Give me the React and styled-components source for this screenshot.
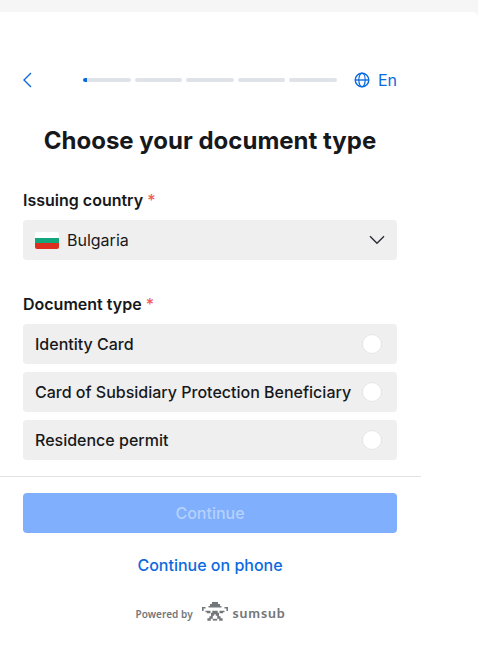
import React from "react";
import styled, { createGlobalStyle } from "styled-components";

const documents = [
  "Identity Card",
  "Card of Subsidiary Protection Beneficiary",
  "Residence permit",
];

function App() {
  return (
    <Page>
      <GlobalStyle />
      <Card>
        <Content>
          <Header>
            <BackButton aria-label="Back">
              <BackIcon />
            </BackButton>
            <Steps>
              <Step $progress={4} />
              <Step />
              <Step />
              <Step />
              <Step />
            </Steps>
            <Language>
              <GlobeIcon />
              En
            </Language>
          </Header>
          <Title>Choose your document type</Title>
          <Label>
            Issuing country <Required>*</Required>
          </Label>
          <CountrySelect>
            <Flag />
            <CountryName>Bulgaria</CountryName>
            <ChevronIcon />
          </CountrySelect>
          <Label>
            Document type <Required>*</Required>
          </Label>
          <Options>
            {documents.map((name) => (
              <Option key={name}>
                {name}
                <Radio />
              </Option>
            ))}
          </Options>
        </Content>
        <Footer>
          <ContinueButton disabled>Continue</ContinueButton>
          <PhoneLink>Continue on phone</PhoneLink>
          <Powered>
            <PoweredText>Powered by</PoweredText>
            <LogoIcon />
            <Brand>sumsub</Brand>
          </Powered>
        </Footer>
      </Card>
    </Page>
  );
}

const BackIcon = () => (
  <svg width="10" height="16" viewBox="0 0 10 16" fill="none">
    <path d="M8 1L1 8L8 15" stroke="#0b6adf" strokeWidth="1.4" />
  </svg>
);

const GlobeIcon = () => (
  <svg width="16" height="16" viewBox="0 0 16 16" fill="none" stroke="#0b6adf">
    <circle cx="8" cy="8" r="6.8" strokeWidth="1.4" />
    <ellipse cx="8" cy="8" rx="3.2" ry="6.8" strokeWidth="1.2" />
    <path d="M1 8H15" strokeWidth="1.4" />
  </svg>
);

const ChevronIcon = () => (
  <svg width="16" height="10" viewBox="0 0 16 10" fill="none">
    <path d="M1 1.2L8 8.2L15 1.2" stroke="#2b2d33" strokeWidth="1.4" />
  </svg>
);

const LogoIcon = () => (
  <LogoSvg width="26" height="19" viewBox="0 0 26 19" fill="#74777a">
    <path d="M10 0h6v2h2v2h1.5v1.5h-13V4H8V2h2z" />
    <path d="M0 5h3.5v1.6H1.6V9H0zM26 5h-3.5v1.6h1.9V9H26z" />
    <path d="M3.5 8.8h5v2.4h-3.5v-1h-1.5zM22.5 8.8h-5v2.4h3.5v-1h1.5z" />
    <path d="M10.3 8.8h5.4v2h1.3v3.4h1.6v2h2v2.6h-3.4v-2h-2v-3h-1.4v-1.6h-1.6v1.6h-1.4v3h-2v2H5.4v-2.6h2v-2H9v-3.4h1.3z" />
    <path d="M10.8 16.8h4.4v1.8h-4.4z" />
  </LogoSvg>
);

const GlobalStyle = createGlobalStyle`
  body {
    margin: 0;
    background: #f6f6f6;
    font-family: Inter, sans-serif;
    color: #17181b;
  }
  * {
    box-sizing: border-box;
  }
  button {
    font: inherit;
    border: 0;
    padding: 0;
  }
  svg {
    display: block;
    flex: none;
  }
`;

const Page = styled.div`
  padding-top: 12px;
  height: 670px;
  overflow: hidden;
`;

const Card = styled.div`
  height: 658px;
  background: #fff;
  border-top-right-radius: 6px;
`;

const Content = styled.div`
  width: 421px;
  height: 464px;
  padding: 56px 24px 0 23px;
`;

const Header = styled.div`
  display: flex;
  align-items: center;
  height: 24px;
`;

const BackButton = styled.button`
  width: 60px;
  background: none;
`;

const Steps = styled.div`
  display: flex;
  gap: 4px;
  width: 254px;
`;

const Step = styled.div`
  flex: 1;
  height: 4px;
  border-radius: 2px;
  background: ${({ $progress }) =>
    $progress
      ? `linear-gradient(to right, #0b6adf ${$progress}px, #dfe2e6 ${$progress}px)`
      : "#dfe2e6"};
`;

const Language = styled.div`
  display: flex;
  align-items: center;
  gap: 8px;
  margin-left: auto;
  font-size: 16px;
  line-height: 24px;
  color: #0b6adf;
`;

const Title = styled.h1`
  margin: 33px 0 31px;
  font-size: 24px;
  line-height: 32px;
  font-weight: 700;
  text-align: center;
  white-space: nowrap;
`;

const Label = styled.div`
  font-size: 16px;
  line-height: 24px;
  font-weight: 600;
  margin-bottom: 8px;
`;

const Required = styled.span`
  color: #f05c58;
  font-weight: 500;
`;

const CountrySelect = styled.div`
  display: flex;
  align-items: center;
  height: 40px;
  margin-bottom: 32px;
  padding: 0 12px;
  border-radius: 4px;
  background: #efefef;
`;

const Flag = styled.span`
  width: 24px;
  height: 17px;
  border-radius: 2px;
  background: linear-gradient(#fff 33%, #12a67c 33% 66%, #dc2f1f 66%);
`;

const CountryName = styled.span`
  flex: 1;
  margin-left: 8px;
  font-size: 16px;
`;

const Options = styled.div`
  display: flex;
  flex-direction: column;
  gap: 8px;
`;

const Option = styled.div`
  display: flex;
  align-items: center;
  justify-content: space-between;
  height: 40px;
  padding: 0 15px 0 12px;
  border-radius: 4px;
  background: #efefef;
  font-size: 16px;
  font-weight: 500;
  white-space: nowrap;
`;

const Radio = styled.span`
  width: 20px;
  height: 20px;
  border: 1px solid #e6e6e6;
  border-radius: 50%;
  background: #fff;
`;

const Footer = styled.div`
  display: flex;
  flex-direction: column;
  align-items: center;
  width: 421px;
  padding: 16px 24px 0 23px;
  border-top: 1px solid #e2e3e5;
`;

const ContinueButton = styled.button`
  width: 100%;
  height: 40px;
  border-radius: 4px;
  background: #80affd;
  color: #b5d1fc;
  font-size: 16px;
  font-weight: 500;
`;

const PhoneLink = styled.a`
  margin-top: 20px;
  font-size: 16px;
  line-height: 24px;
  font-weight: 500;
  color: #0b6adf;
`;

const Powered = styled.div`
  display: flex;
  align-items: center;
  margin: 25px 0 0 2px;
  height: 19px;
  color: #74777a;
  white-space: nowrap;
`;

const PoweredText = styled.span`
  width: 66px;
  padding-top: 5px;
  font-family: "Noto Sans", sans-serif;
  font-size: 10px;
  line-height: 14px;
  font-weight: 600;
  letter-spacing: 0.05px;
`;

const LogoSvg = styled.svg`
  margin-right: 5px;
`;

const Brand = styled.span`
  width: 54px;
  padding-top: 3px;
  font-family: Lato, sans-serif;
  font-size: 14px;
  line-height: 16px;
  font-weight: 700;
  letter-spacing: 0.9px;
`;

export default App;
